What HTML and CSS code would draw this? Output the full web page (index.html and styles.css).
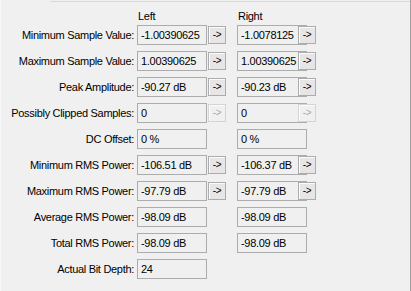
FILE: index.html
```html
<!DOCTYPE html>
<html>
<head>
<meta charset="utf-8">
<link rel="stylesheet" href="styles.css">
</head>
<body>
<div class="panel">
  <div class="topline"></div>
  <div class="grid">
    <div class="head c-left">Left</div>
    <div class="head c-right">Right</div>

    <div class="label">Minimum Sample Value:</div>
    <div class="box">-1.00390625</div><button class="btn">-&gt;</button>
    <div class="box rbox">-1.0078125</div><button class="btn">-&gt;</button>

    <div class="label">Maximum Sample Value:</div>
    <div class="box">1.00390625</div><button class="btn">-&gt;</button>
    <div class="box rbox">1.00390625</div><button class="btn">-&gt;</button>

    <div class="label">Peak Amplitude:</div>
    <div class="box">-90.27 dB</div><button class="btn">-&gt;</button>
    <div class="box rbox">-90.23 dB</div><button class="btn">-&gt;</button>

    <div class="label">Possibly Clipped Samples:</div>
    <div class="box">0</div><button class="btn off">-&gt;</button>
    <div class="box rbox">0</div><button class="btn off">-&gt;</button>

    <div class="label">DC Offset:</div>
    <div class="box">0 %</div><div class="nobtn"></div>
    <div class="box rbox">0 %</div><div class="nobtn"></div>

    <div class="label">Minimum RMS Power:</div>
    <div class="box">-106.51 dB</div><button class="btn">-&gt;</button>
    <div class="box rbox">-106.37 dB</div><button class="btn">-&gt;</button>

    <div class="label">Maximum RMS Power:</div>
    <div class="box">-97.79 dB</div><button class="btn">-&gt;</button>
    <div class="box rbox">-97.79 dB</div><button class="btn">-&gt;</button>

    <div class="label">Average RMS Power:</div>
    <div class="box">-98.09 dB</div><div class="nobtn"></div>
    <div class="box rbox">-98.09 dB</div><div class="nobtn"></div>

    <div class="label">Total RMS Power:</div>
    <div class="box">-98.09 dB</div><div class="nobtn"></div>
    <div class="box rbox">-98.09 dB</div><div class="nobtn"></div>

    <div class="label">Actual Bit Depth:</div>
    <div class="box">24</div>
  </div>
</div>
</body>
</html>
```

FILE: styles.css
```css
html, body {
  margin: 0;
  padding: 0;
  background: #f0f0f0;
}
.panel {
  width: 411px;
  height: 291px;
  box-sizing: border-box;
  background: #f0f0f0;
  border-left: 1px solid #f8f8f8;
  border-right: 1px solid #a0a0a0;
  font-family: "Liberation Sans", Arial, sans-serif;
  font-size: 11px;
  letter-spacing: -0.3px;
  color: #000;
  overflow: hidden;
}
.topline {
  margin-left: 49px;
  height: 1px;
  margin-top: 1px;
  background: #d8d8d8;
}
.grid {
  display: grid;
  grid-template-columns: 132px 70px 18px 70px 18px;
  grid-template-rows: 10px;
  column-gap: 1px;
  row-gap: 6px;
  grid-auto-rows: 20px;
  padding-top: 7px;
  padding-left: 3px;
}
.head {
  height: 14px;
  line-height: 14px;
  align-self: start;
}
.c-left {
  grid-column: 2;
  padding-left: 1px;
}
.c-right {
  grid-column: 4;
  padding-left: 11px;
}
.label {
  grid-column: 1;
  text-align: right;
  line-height: 20px;
  white-space: nowrap;
  padding-right: 2px;
}
.box {
  box-sizing: border-box;
  width: 70px;
  height: 20px;
  border: 1px solid #acacac;
  padding: 2px 0 0 3px;
  line-height: 14px;
  white-space: nowrap;
}
.grid .rbox {
  margin-left: 10px;
}
.btn {
  box-sizing: border-box;
  width: 18px;
  height: 18px;
  align-self: center;
  margin: 0;
  padding: 0 0 1px 0;
  border: 1px solid #acacac;
  background: #e6e6e6;
  box-shadow: inset 1px 1px #fcfcfc;
  font-family: "Liberation Sans", Arial, sans-serif;
  font-size: 10px;
  line-height: 14px;
  letter-spacing: -0.3px;
  color: #000;
  text-align: center;
}
.btn.off {
  border-color: #d4d4d4;
  background: #f0f0f0;
  color: #a8a8a8;
}
.nobtn {
  width: 18px;
}
```
